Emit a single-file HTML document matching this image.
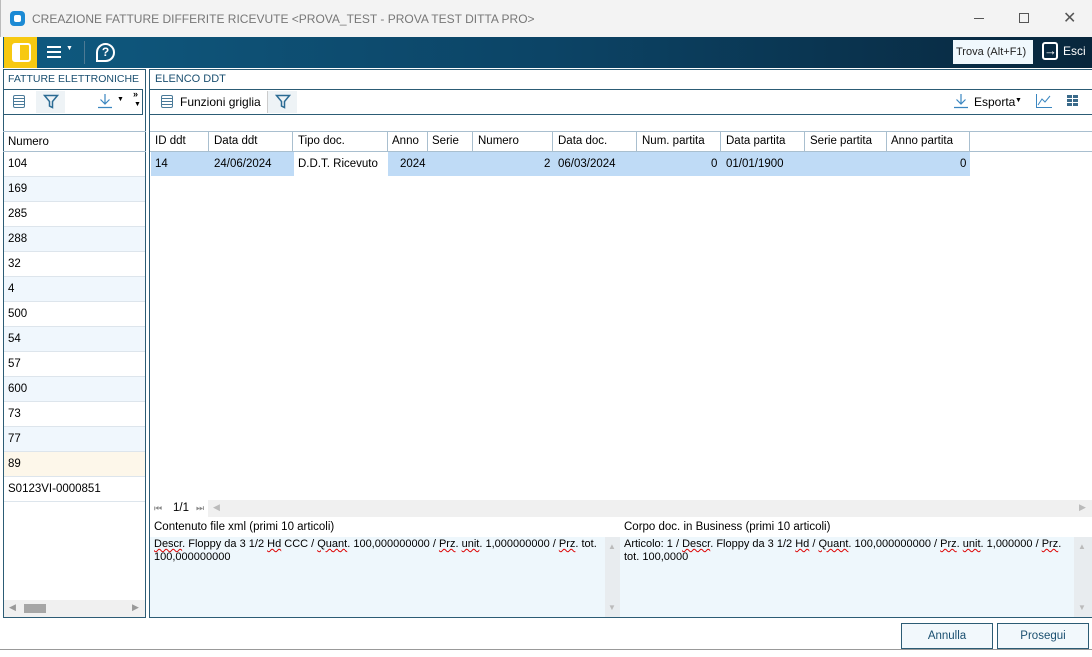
<!DOCTYPE html>
<html><head><meta charset="utf-8"><style>
*{box-sizing:border-box;margin:0;padding:0}
body{width:1092px;height:657px;overflow:hidden;background:#fff;font-family:"Liberation Sans",sans-serif;font-size:11.5px;color:#000;position:relative}
.a{position:absolute}
.t{white-space:nowrap}
.sq{text-decoration:underline wavy #d00;text-decoration-thickness:1px}
</style></head><body>
<div class="a" style="left:0;top:649px;width:1092px;height:8px;background:#fff;border-top:1px solid #999"></div>
<div class="a" style="left:0;top:0;width:1092px;height:37px;background:#f3f3f3;border-left:1px solid #bbb"></div>
<div class="a" style="left:10px;top:11px;width:15px;height:15px;background:#1c8ad4;border-radius:4px"></div>
<div class="a" style="left:14px;top:15px;width:7px;height:7px;background:#fff;border-radius:2px"></div>
<div class="a t" style="left:32px;top:12px;font-size:12px;color:#777">CREAZIONE FATTURE DIFFERITE RICEVUTE &lt;PROVA_TEST - PROVA TEST DITTA PRO&gt;</div>
<div class="a" style="left:974px;top:18px;width:10px;height:1px;background:#555"></div>
<div class="a" style="left:1019px;top:13px;width:10px;height:10px;border:1px solid #555"></div>
<div class="a t" style="left:1063px;top:8px;font-size:16px;color:#555">✕</div>
<div class="a" style="left:3px;top:37px;width:1089px;height:31px;background:linear-gradient(90deg,#0f5a80,#0c4466 50%,#08263c)"></div>
<div class="a" style="left:4px;top:37px;width:33px;height:31px;background:#f7c911"></div>
<div class="a" style="left:12px;top:43px;width:19px;height:19px;border:2px solid #fff;border-radius:3px"></div>
<div class="a" style="left:14px;top:45px;width:6px;height:15px;background:#fff"></div>
<div class="a" style="left:47px;top:46px;width:14px;height:2px;background:#fff;box-shadow:0 5px 0 #fff,0 10px 0 #fff"></div>
<div class="a t" style="left:66px;top:45px;color:#fff;font-size:7px">▼</div>
<div class="a" style="left:84px;top:41px;width:1px;height:23px;background:#4d7a94"></div>
<div class="a" style="left:96px;top:43px;width:19px;height:19px;border:2px solid #fff;border-radius:50% 50% 50% 0;color:#fff;font-size:12px;font-weight:bold;text-align:center;line-height:15px">?</div>
<div class="a t" style="left:953px;top:40px;width:80px;height:24px;background:#f0f8fd;color:#222;font-size:11px;line-height:24px;padding-left:3px">Trova (Alt+F1)</div>
<div class="a" style="left:1042px;top:42px;width:16px;height:18px;border:2px solid #fff;border-radius:3px;color:#fff;font-size:13px;line-height:13px;text-align:right">→</div>
<div class="a t" style="left:1063px;top:44px;color:#fff;font-size:12px">Esci</div>
<div class="a" style="left:3px;top:69px;width:143px;height:549px;border:1px solid #2c5c75"></div>
<div class="a t" style="left:8px;top:73px;color:#1a4f70;font-size:10.5px">FATTURE ELETTRONICHE</div>
<div class="a" style="left:3px;top:89px;width:140px;height:26px;border-top:1px solid #2c5c75;border-bottom:1px solid #2c5c75;border-right:1px solid #2c5c75"></div>
<div class="a" style="left:13px;top:95px;width:12px;height:13px;border:1px solid #4a7a99;border-radius:2px;background:repeating-linear-gradient(#fff 0 2px,#4a7a99 2px 3px)"></div>
<div class="a" style="left:36px;top:91px;width:29px;height:22px;background:#eef3f6"></div>
<svg class="a" style="left:43px;top:94px" width="16" height="15"><path d="M1.5 1.5 H14.5 L9.5 7.5 V13.5 L6.5 12 V7.5 Z" fill="none" stroke="#2b6b93" stroke-width="1.5"/></svg>
<svg class="a" style="left:97px;top:93px" width="16" height="16"><path d="M8 1 V11 M3.5 6.5 L8 11 L12.5 6.5 M1 14.5 H15" fill="none" stroke="#3a86c0" stroke-width="1.2"/></svg>
<div class="a t" style="left:117px;top:96px;font-size:7px">▼</div>
<div class="a t" style="left:133px;top:89px;font-size:9px;font-weight:bold">»</div>
<div class="a t" style="left:134px;top:101px;font-size:7px">▼</div>
<div class="a" style="left:3px;top:131px;width:143px;height:1px;background:#a9bfcf"></div>
<div class="a t" style="left:8px;top:136px">Numero</div>
<div class="a" style="left:3px;top:151px;width:143px;height:1px;background:#a9bfcf"></div>
<div class="a" style="left:4px;top:152px;width:141px">
<div style="height:25px;border-bottom:1px solid #dde5ec;padding:6px 0 0 4px">104</div>
<div style="height:25px;border-bottom:1px solid #dde5ec;padding:6px 0 0 4px;background:#f0f7fd">169</div>
<div style="height:25px;border-bottom:1px solid #dde5ec;padding:6px 0 0 4px">285</div>
<div style="height:25px;border-bottom:1px solid #dde5ec;padding:6px 0 0 4px;background:#f0f7fd">288</div>
<div style="height:25px;border-bottom:1px solid #dde5ec;padding:6px 0 0 4px">32</div>
<div style="height:25px;border-bottom:1px solid #dde5ec;padding:6px 0 0 4px;background:#f0f7fd">4</div>
<div style="height:25px;border-bottom:1px solid #dde5ec;padding:6px 0 0 4px">500</div>
<div style="height:25px;border-bottom:1px solid #dde5ec;padding:6px 0 0 4px;background:#f0f7fd">54</div>
<div style="height:25px;border-bottom:1px solid #dde5ec;padding:6px 0 0 4px">57</div>
<div style="height:25px;border-bottom:1px solid #dde5ec;padding:6px 0 0 4px;background:#f0f7fd">600</div>
<div style="height:25px;border-bottom:1px solid #dde5ec;padding:6px 0 0 4px">73</div>
<div style="height:25px;border-bottom:1px solid #dde5ec;padding:6px 0 0 4px;background:#f0f7fd">77</div>
<div style="height:25px;border-bottom:1px solid #dde5ec;padding:6px 0 0 4px;background:#fdf7ea">89</div>
<div style="height:25px;border-bottom:1px solid #dde5ec;padding:6px 0 0 4px">S0123VI-0000851</div>
</div>
<div class="a" style="left:4px;top:600px;width:141px;height:17px;background:#f0f0f0"></div>
<div class="a t" style="left:9px;top:602px;color:#999;font-size:9px">◀</div>
<div class="a" style="left:24px;top:604px;width:22px;height:9px;background:#a6a6a6"></div>
<div class="a t" style="left:132px;top:602px;color:#999;font-size:9px">▶</div>
<div class="a" style="left:149px;top:69px;width:943px;height:549px;border:1px solid #2c5c75;border-right:none"></div>
<div class="a t" style="left:155px;top:73px;color:#1a4f70;font-size:11px">ELENCO DDT</div>
<div class="a" style="left:150px;top:89px;width:942px;height:26px;border-top:1px solid #2c5c75;border-bottom:1px solid #2c5c75"></div>
<div class="a" style="left:161px;top:95px;width:12px;height:13px;border:1px solid #4a7a99;border-radius:2px;background:repeating-linear-gradient(#fff 0 2px,#4a7a99 2px 3px)"></div>
<div class="a t" style="left:180px;top:95px;font-size:12px">Funzioni griglia</div>
<div class="a" style="left:267px;top:91px;width:30px;height:22px;background:#eef3f6;border-left:1px solid #ccc"></div>
<svg class="a" style="left:275px;top:94px" width="16" height="15"><path d="M1.5 1.5 H14.5 L9.5 7.5 V13.5 L6.5 12 V7.5 Z" fill="none" stroke="#2b6b93" stroke-width="1.5"/></svg>
<svg class="a" style="left:953px;top:93px" width="16" height="16"><path d="M8 1 V11 M3.5 6.5 L8 11 L12.5 6.5 M1 14.5 H15" fill="none" stroke="#3a86c0" stroke-width="1.2"/></svg>
<div class="a t" style="left:974px;top:95px;font-size:12px">Esporta</div>
<div class="a t" style="left:1015px;top:97px;font-size:7px">▼</div>
<div class="a" style="left:1036px;top:94px;width:16px;height:14px;border-left:1px solid #3a86c0;border-bottom:1px solid #3a86c0"></div>
<svg class="a" style="left:1037px;top:94px" width="15" height="13"><path d="M1 11 L5 5 L8 8 L13 2" stroke="#3a86c0" fill="none"/></svg>
<div class="a" style="left:1067px;top:95px;width:5px;height:3px;background:#3a6a8a;box-shadow:6px 0 #3a6a8a,0 4px #3a6a8a,6px 4px #3a6a8a,0 8px #3a6a8a,6px 8px #3a6a8a"></div>
<div class="a" style="left:150px;top:131px;width:942px;height:21px;border-top:1px solid #a9bfcf;border-bottom:1px solid #a9bfcf"></div>
<div class="a" style="left:151px;top:132px;height:19px;display:flex">
<div style="width:58px;border-right:1px solid #a9bfcf;padding:3px 4px">ID ddt</div>
<div style="width:84px;border-right:1px solid #a9bfcf;padding:3px 5px">Data ddt</div>
<div style="width:95px;border-right:1px solid #a9bfcf;padding:3px 5px">Tipo doc.</div>
<div style="width:40px;border-right:1px solid #a9bfcf;padding:3px 4px">Anno</div>
<div style="width:45px;border-right:1px solid #a9bfcf;padding:3px 4px">Serie</div>
<div style="width:80px;border-right:1px solid #a9bfcf;padding:3px 5px">Numero</div>
<div style="width:84px;border-right:1px solid #a9bfcf;padding:3px 5px">Data doc.</div>
<div style="width:84px;border-right:1px solid #a9bfcf;padding:3px 5px">Num. partita</div>
<div style="width:84px;border-right:1px solid #a9bfcf;padding:3px 5px">Data partita</div>
<div style="width:82px;border-right:1px solid #a9bfcf;padding:3px 5px">Serie partita</div>
<div style="width:83px;border-right:1px solid #a9bfcf;padding:3px 4px">Anno partita</div>
</div>
<div class="a" style="left:151px;top:152px;width:819px;height:24px;background:#bfdbf6"></div>
<div class="a" style="left:294px;top:152px;width:94px;height:24px;background:#fff"></div>
<div class="a t" style="left:155px;top:158px">14</div>
<div class="a t" style="left:214px;top:158px">24/06/2024</div>
<div class="a t" style="left:298px;top:158px">D.D.T. Ricevuto</div>
<div class="a t" style="left:400px;top:158px">2024</div>
<div class="a t" style="left:544px;top:158px">2</div>
<div class="a t" style="left:558px;top:158px">06/03/2024</div>
<div class="a t" style="left:711px;top:158px">0</div>
<div class="a t" style="left:726px;top:158px">01/01/1900</div>
<div class="a t" style="left:960px;top:158px">0</div>
<div class="a" style="left:150px;top:500px;width:942px;height:17px;background:#f0f0f0"></div>
<div class="a" style="left:150px;top:500px;width:58px;height:17px;background:#fff"></div>
<div class="a t" style="left:154px;top:503px;color:#888;font-size:9px">⏮</div>
<div class="a t" style="left:173px;top:502px">1/1</div>
<div class="a t" style="left:196px;top:503px;color:#888;font-size:9px">⏭</div>
<div class="a t" style="left:213px;top:502px;color:#bbb;font-size:9px">◀</div>
<div class="a t" style="left:1079px;top:502px;color:#bbb;font-size:9px">▶</div>
<div class="a t" style="left:154px;top:521px">Contenuto file xml (primi 10 articoli)</div>
<div class="a" style="left:150px;top:537px;width:470px;height:80px;background:#eef7fc"></div>
<div class="a" style="left:605px;top:537px;width:15px;height:80px;background:#e8ecef"></div>
<div class="a" style="left:154px;top:538px;line-height:13px;width:450px;font-size:11px">
<span class="sq">Descr</span>. Floppy da 3 1/2 <span class="sq">Hd</span> CCC / <span class="sq">Quant</span>. 100,000000000 / <span class="sq">Prz</span>. <span class="sq">unit</span>. 1,000000000 / <span class="sq">Prz</span>. tot. 100,000000000</div>
<div class="a t" style="left:624px;top:521px">Corpo doc. in Business (primi 10 articoli)</div>
<div class="a" style="left:620px;top:537px;width:472px;height:80px;background:#eef7fc"></div>
<div class="a" style="left:1074px;top:537px;width:18px;height:80px;background:#e8ecef"></div>
<div class="a t" style="left:608px;top:542px;color:#bbb;font-size:8px">▲</div>
<div class="a t" style="left:608px;top:603px;color:#bbb;font-size:8px">▼</div>
<div class="a t" style="left:1078px;top:542px;color:#bbb;font-size:8px">▲</div>
<div class="a t" style="left:1078px;top:603px;color:#bbb;font-size:8px">▼</div>
<div class="a" style="left:624px;top:538px;line-height:13px;width:448px;font-size:11px">
Articolo: 1 / <span class="sq">Descr</span>. Floppy da 3 1/2 <span class="sq">Hd</span> / <span class="sq">Quant</span>. 100,000000000 / <span class="sq">Prz</span>. <span class="sq">unit</span>. 1,000000 / <span class="sq">Prz</span>. tot. 100,0000</div>
<div class="a" style="left:901px;top:623px;width:92px;height:26px;border:1px solid #2c5c75;background:#f2f8fc;color:#1a4f70;text-align:center;line-height:24px">Annulla</div>
<div class="a" style="left:997px;top:623px;width:92px;height:26px;border:1px solid #2c5c75;background:#f2f8fc;color:#1a4f70;text-align:center;line-height:24px">Prosegui</div>
</body></html>
